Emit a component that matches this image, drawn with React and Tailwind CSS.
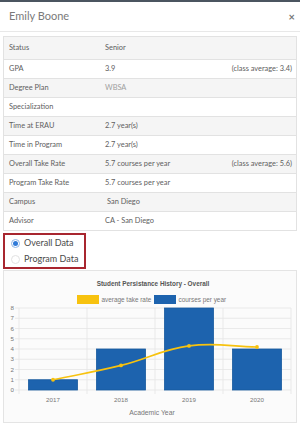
import React from "react";

const rows = [
  ["Status", "Senior", ""],
  ["GPA", "3.9", "(class average: 3.4)"],
  ["Degree Plan", "WBSA", ""],
  ["Specialization", "", ""],
  ["Time at ERAU", "2.7 year(s)", ""],
  ["Time in Program", "2.7 year(s)", ""],
  ["Overall Take Rate", "5.7 courses per year", "(class average: 5.6)"],
  ["Program Take Rate", "5.7 courses per year", ""],
  ["Campus", "San Diego", ""],
  ["Advisor", "CA - San Diego", ""],
];

function Chart() {
  const top = 37;
  const bottom = 119;
  const unit = (bottom - top) / 8;
  const left = 15;
  const right = 287;
  const cw = (right - left) / 4;
  const bars = [1, 4, 8, 4];
  const years = ["2017", "2018", "2019", "2020"];
  const pts = [
    [49, 108.75],
    [117, 94.4],
    [185, 74.9],
    [253, 76],
  ];
  return (
    <svg width="292" height="151" viewBox="0 0 292 151" style={{ fontFamily: "'Liberation Sans', Arial, sans-serif" }}>
      <text x="149" y="14.5" textAnchor="middle" fontSize="6.4" fontWeight="bold" fill="#555">
        Student Persistance History - Overall
      </text>
      <rect x="73" y="24" width="22" height="9" fill="#f7c20f" />
      <text x="97.5" y="31" fontSize="6.4" fill="#777">average take rate</text>
      <rect x="150" y="24" width="22" height="9" fill="#1d63ae" />
      <text x="174.5" y="31" fontSize="6.4" fill="#777">courses per year</text>
      {[0, 1, 2, 3, 4, 5, 6, 7, 8].map((v) => (
        <g key={v}>
          <line x1={left - 4} x2={right} y1={bottom - v * unit} y2={bottom - v * unit} stroke="#e6e6e6" strokeWidth="0.8" />
          <text x="10" y={bottom - v * unit + 2.2} textAnchor="end" fontSize="6.2" fill="#777">
            {v}
          </text>
        </g>
      ))}
      {[0, 1, 2, 3, 4].map((i) => (
        <line key={i} x1={left + i * cw} x2={left + i * cw} y1={top} y2={bottom + 4} stroke="#e6e6e6" strokeWidth="0.8" />
      ))}
      {bars.map((b, i) => (
        <rect
          key={i}
          x={left + i * cw + 9.5}
          y={bottom - b * unit}
          width="49"
          height={b * unit}
          fill="#1d63ae"
          stroke="#175a9f"
          strokeWidth="0.8"
        />
      ))}
      <path
        d="M49,108.75 C76.2,103 90.1,101.1 117,94.4 C144.5,87.56 157.3,78.65 185,74.9 C211.7,71.3 225.8,75.56 253,76"
        fill="none"
        stroke="#f7c20f"
        strokeWidth="1.6"
      />
      {pts.map(([x, y], i) => (
        <circle key={i} cx={x} cy={y} r="1.9" fill="#f7c20f" />
      ))}
      {years.map((y, i) => (
        <text key={y} x={left + i * cw + cw / 2} y="131" textAnchor="middle" fontSize="6.2" fill="#777">
          {y}
        </text>
      ))}
      <text x="148" y="143.5" textAnchor="middle" fontSize="6.8" fill="#777">
        Academic Year
      </text>
    </svg>
  );
}

function Radio({ checked, label }) {
  return (
    <div className="flex items-center gap-[4px] h-[16px]">
      {checked ? (
        <span className="w-[9px] h-[9px] rounded-full border border-[#8fb6e6] bg-white flex items-center justify-center">
          <span className="w-[5px] h-[5px] rounded-full bg-[#2f7ad8]" />
        </span>
      ) : (
        <span className="w-[9px] h-[9px] rounded-full border border-[#e2e2e2] bg-white" />
      )}
      <span className="text-[9px] text-[#4a4a4a]">{label}</span>
    </div>
  );
}

export default function App() {
  return (
    <div
      className="w-[300px] h-[433px] bg-white overflow-hidden border-t-2 border-[#4b5560] flex flex-col"
      style={{ fontFamily: "Lato, 'Open Sans', sans-serif" }}
    >
      <div className="h-[30px] flex items-center justify-between pl-[9px] pr-[5px] border-b border-[#e8e8e8] shrink-0">
        <span className="text-[11px] text-[#7a7a7a]">Emily Boone</span>
        <span className="text-[11px] font-bold text-[#777] leading-none">×</span>
      </div>
      <div className="px-[3px] pt-[4px] flex flex-col">
        <div className="border border-[#e2e2e2]">
          {rows.map(([k, v, extra], i) => (
            <div
              key={k}
              className={`flex items-center text-[7.4px] text-[#606060] ${i === 0 ? "h-[22px]" : "h-[19px] border-t border-[#e2e2e2]"} ${i % 2 === 0 ? "bg-[#f5f5f5]" : "bg-white"}`}
            >
              <span className="w-[101px] pl-[5px] shrink-0">{k}</span>
              <span className={`flex-1 ${k === "Degree Plan" ? "text-[#a0a0a0]" : ""} ${k === "Campus" ? "pl-[2px]" : ""}`}>
                {v}
              </span>
              {extra && <span className="pr-[4px]">{extra}</span>}
            </div>
          ))}
        </div>
        <div className="mt-[2px] w-[83px] h-[36px] border-2 border-[#a8262f] flex flex-col justify-center pl-[6px]">
          <Radio checked label="Overall Data" />
          <Radio label="Program Data" />
        </div>
        <div className="mt-[1px] h-[153px] border border-[#e4e4e4] bg-[#fbfbfb]">
          <Chart />
        </div>
      </div>
    </div>
  );
}
